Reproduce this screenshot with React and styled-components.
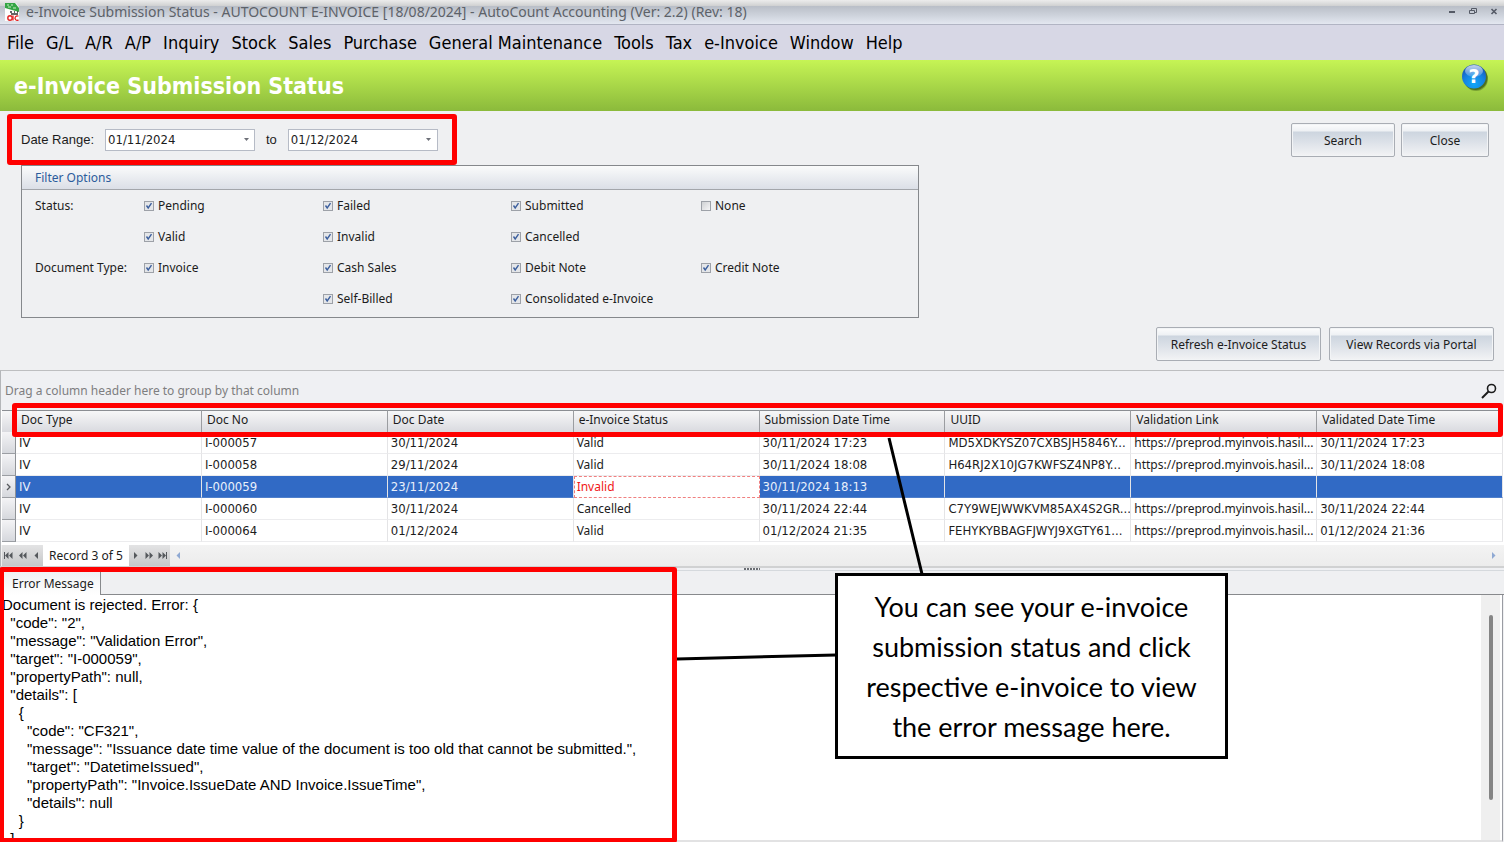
import { useState } from 'react';
import styled, { createGlobalStyle } from 'styled-components';

const GlobalStyle = createGlobalStyle`
  * {
    box-sizing: border-box;
  }

  body {
    margin: 0;
    background-color: #eff0f2;
    color: #1c1c1c;
    font-family: 'Noto Sans', sans-serif;
    font-size: 12px;
  }

  button,
  input {
    font: inherit;
    color: inherit;
  }
`;

const AppWindow = styled.div`
  display: flex;
  flex-direction: column;
  height: 100vh;
  overflow: hidden;
`;

const TitleBar = styled.header`
  display: flex;
  align-items: center;
  gap: 6px;
  height: 25px;
  flex-shrink: 0;
  padding: 0 4px;
  background: linear-gradient(#ececec 0, #cfd0d1 6px, #b9bec7 6px, #cdd2db 15px, #e3e7f0 24px);
  border-bottom: 1px solid #b1b4c3;
  color: #5d6269;
  font-size: 14px;
`;

const TitleText = styled.span`
  flex: 1;
  line-height: 24px;
  white-space: nowrap;
`;

const WindowControls = styled.div`
  display: flex;
  gap: 9px;
  align-self: flex-start;
  padding-top: 5px;
`;

const WindowButton = styled.button`
  display: flex;
  width: 12px;
  height: 12px;
  padding: 0;
  border: none;
  background: none;
  cursor: pointer;
`;

const MenuBar = styled.nav`
  display: flex;
  gap: 12px;
  flex-shrink: 0;
  height: 35px;
  padding: 0 7px;
  background-color: #d7d7e5;
`;

const MenuItem = styled.button`
  padding: 0;
  border: none;
  background: none;
  color: #000;
  font-family: 'DejaVu Sans Condensed', 'DejaVu Sans', sans-serif;
  font-size: 18px;
  line-height: 34px;
  white-space: nowrap;
  cursor: pointer;
`;

const Banner = styled.div`
  display: flex;
  align-items: center;
  justify-content: space-between;
  flex-shrink: 0;
  height: 51px;
  padding: 0 15px 0 14px;
  background: linear-gradient(#c6f455, #8bba3b);
`;

const BannerTitle = styled.h1`
  margin: 0;
  color: #fff;
  font-family: 'DejaVu Sans Condensed', 'DejaVu Sans', sans-serif;
  font-size: 23px;
  font-weight: bold;
  line-height: 50px;
`;

const HelpButton = styled.button`
  display: flex;
  align-self: flex-start;
  margin-top: 3px;
  padding: 0;
  border: none;
  background: none;
  cursor: pointer;
`;

const SearchRow = styled.div`
  display: flex;
  align-items: flex-start;
  justify-content: space-between;
  padding: 3px 15px 0 7px;
`;

const DateRange = styled.div`
  display: flex;
  align-items: center;
  gap: 11px;
  height: 51px;
  padding: 0 14px 0 9px;
  border: 5px solid #ff0000;
  border-radius: 3px;
  font-family: 'Liberation Sans', Arial, sans-serif;
  font-size: 13px;
`;

const DateField = styled.div`
  display: flex;
  width: 150px;
  height: 22px;
  border: 1px solid #b6bbc6;
  background-color: #fff;

  input {
    flex: 1;
    min-width: 0;
    padding: 0 2px;
    border: none;
    outline: none;
    background: none;
    font-family: 'DejaVu Sans Condensed', 'DejaVu Sans', sans-serif;
    font-size: 13px;
  }

  button {
    display: flex;
    align-items: center;
    justify-content: center;
    width: 16px;
    padding: 0;
    border: none;
    background: none;
  }
`;

const Actions = styled.div`
  display: flex;
  gap: ${props => props.$gap || '6px'};
  padding-top: 9px;
`;

const ActionRow = styled.div`
  display: flex;
  justify-content: flex-end;
  padding: 0 10px 9px 0;
`;

const ActionButton = styled.button`
  width: ${props => props.$width};
  height: 34px;
  padding: 0;
  border: 1px solid #a9adb4;
  border-radius: 2px;
  background: linear-gradient(#fcfcfd 0, #eef1f4 7px, #cdd5df 8px, #dce1e8 18px, #f1f2f4 31px);
  box-shadow: inset 0 0 0 1px #f2f4f6;
  cursor: pointer;
`;

const FilterBox = styled.section`
  flex-shrink: 0;
  width: 898px;
  max-width: calc(100% - 42px);
  margin-left: 21px;
  padding-bottom: 3px;
  border: 1px solid #85888c;
`;

const FilterTitle = styled.h2`
  margin: 0;
  padding-left: 13px;
  background: linear-gradient(#fafbfb, #dbdfe7);
  border-bottom: 1px solid #a3a6ab;
  color: #2c5c9c;
  font-size: 12px;
  font-weight: normal;
  line-height: 23px;
`;

const FilterGrid = styled.div`
  display: grid;
  grid-template-columns: 109px 179px 188px 190px auto;
  grid-auto-rows: 31px;
  align-items: center;
  padding-left: 13px;
`;

const FilterLabel = styled.span`
  grid-column: 1;
  white-space: nowrap;
`;

const CheckLabel = styled.label`
  display: flex;
  align-items: center;
  gap: 4px;
  grid-column: ${props => props.$col};
  justify-self: start;
  white-space: nowrap;
`;

const Checkbox = styled.input`
  appearance: none;
  width: 10px;
  height: 10px;
  margin: 0;
  border: 1px solid #9da1a8;
  background-color: #e4e6e9;
  background-image: ${props => props.checked
    ? `url("data:image/svg+xml,%3Csvg xmlns='http://www.w3.org/2000/svg' viewBox='0 0 8 8'%3E%3Cpath d='M1.5 3.5L3.2 6L6.5 1.2' fill='none' stroke='%233c5f9e' stroke-width='1.4'/%3E%3C/svg%3E")`
    : 'linear-gradient(135deg, #cfd1d4, #f6f6f7)'};
`;

const GridPanel = styled.section`
  flex-shrink: 0;
  border-top: 1px solid #bdbec0;
  border-left: 1px solid #b4b6b9;
  background-color: #fff;
`;

const GroupBar = styled.div`
  display: flex;
  align-items: center;
  justify-content: space-between;
  height: 39px;
  padding: 0 7px 0 4px;
  background-color: #eff0f3;
  color: #7e7e80;
`;

const SearchButton = styled.button`
  display: flex;
  padding: 0;
  border: none;
  background: none;
  cursor: pointer;
`;

const TableWrap = styled.div`
  position: relative;
  padding: 0 1px;
`;

const HeaderMark = styled.div`
  position: absolute;
  top: -7px;
  left: 11px;
  right: 1px;
  height: 34px;
  border: 5px solid #ff0000;
  border-radius: 3px;
  pointer-events: none;
`;

const Table = styled.table`
  width: 100%;
  table-layout: fixed;
  border-collapse: separate;
  border-spacing: 0;

  th,
  td {
    height: 22px;
    overflow: hidden;
    text-align: left;
    white-space: nowrap;
  }
`;

const IndicatorCol = styled.col`
  width: 14px;
`;

const HeaderCell = styled.th`
  padding: 0 5px 3px;
  border-top: 1px solid #8b8e93;
  border-right: 1px solid #9b9da1;
  background: linear-gradient(#f7f7f8, #d9dadf);
  font-weight: normal;
  line-height: 18px;
`;

const Indicator = styled.td`
  padding: 0 0 0 4px;
  border-right: 1px solid #8f9297;
  border-bottom: 1px solid #9b9ea3;
  background: linear-gradient(#f4f4f6, #d6d8dd);
`;

const Cell = styled.td`
  padding: 0 0 0 3px;
  border-right: 1px solid #e4e4e6;
  border-bottom: 1px solid ${props => (props.$selected ? '#4f7fcb' : '#ececee')};
  background-color: ${props => (props.$selected ? '#316ac5' : '#fff')};
  color: ${props => (props.$selected ? '#e9f0fb' : '#1c1c1c')};
  font-family: 'DejaVu Sans Condensed', 'DejaVu Sans', sans-serif;
  font-size: 13px;
  line-height: 18px;
`;

const TextCell = styled(Cell)`
  font-family: 'Noto Sans', sans-serif;
  font-size: 12px;
`;

const FocusCell = styled(TextCell)`
  padding: 0 2px;
  border: 1px dashed #f08080;
  background-color: #fff;
  color: #f01818;
`;

const Navigator = styled.div`
  display: flex;
  align-items: stretch;
  height: 21px;
  margin-top: 3px;
  padding: 0 6px 0 1px;
  background: linear-gradient(#f3f3f3, #ececec);
`;

const NavGroup = styled.div`
  display: flex;
  align-items: center;
  justify-content: space-around;
  width: 41px;
  background: linear-gradient(#e3e3e4, #c6c7c9);
`;

const NavButton = styled.button`
  display: flex;
  padding: 0;
  border: none;
  background: none;
`;

const RecordText = styled.span`
  padding: 0 6px;
  background-color: #fff;
  line-height: 21px;
`;

const HorizontalScroll = styled.div`
  display: flex;
  flex: 1;
  align-items: center;
  justify-content: space-between;
  padding-left: 4px;
`;

const BottomPane = styled.section`
  position: relative;
  display: flex;
  flex: 1;
  flex-direction: column;
  min-height: 0;
`;

const Splitter = styled.div`
  display: flex;
  align-items: center;
  justify-content: center;
  flex-shrink: 0;
  height: 5px;
  border-top: 2px solid #d0d1d2;
  border-bottom: 1px solid #d5d9dd;
  background-color: #eff0f3;
`;

const TabStrip = styled.div`
  display: flex;
  flex-shrink: 0;
  height: 24px;
  padding-left: 4px;
  border-bottom: 1px solid #87898c;
`;

const MessageTab = styled.button`
  height: 24px;
  padding: 0 6px 0 8px;
  border: 1px solid #87898c;
  border-left: none;
  border-bottom: none;
  background: linear-gradient(#f0f1f3, #fff);
`;

const MessageBody = styled.div`
  display: flex;
  flex: 1;
  min-height: 0;
  margin-right: 1px;
  border-right: 1px solid #9a9ca3;
  border-bottom: 2px solid #e2e2e3;
  background-color: #fff;
`;

const MessageText = styled.pre`
  flex: 1;
  margin: 0;
  padding: 1px 2px;
  overflow: hidden;
  color: #000;
  font-family: 'Liberation Sans', Arial, sans-serif;
  font-size: 15px;
  line-height: 18px;
`;

const ScrollTrack = styled.div`
  display: flex;
  justify-content: center;
  width: 19px;
  margin-right: 2px;
  padding: 20px 0 40px;
  background-color: #efefef;
`;

const ScrollThumb = styled.div`
  width: 4px;
  border-radius: 2px;
  background-color: #858585;
`;

const MessageMark = styled.div`
  position: absolute;
  top: 1px;
  bottom: -1px;
  left: -1px;
  width: 678px;
  border: 5px solid #ff0000;
  border-radius: 3px;
  pointer-events: none;
`;

const Connectors = styled.svg`
  position: absolute;
  top: 0;
  left: 0;
  overflow: visible;
  pointer-events: none;
`;

const Callout = styled.aside`
  position: absolute;
  top: 7px;
  left: 835px;
  width: 393px;
  padding: 11px 0 9px;
  border: 3px solid #000;
  background-color: #fff;
  color: #000;
  font-family: Lato, sans-serif;
  font-size: 27px;
  line-height: 40px;
  text-align: center;
`;

const menuItems = [
  'File', 'G/L', 'A/R', 'A/P', 'Inquiry', 'Stock', 'Sales', 'Purchase',
  'General Maintenance', 'Tools', 'Tax', 'e-Invoice', 'Window', 'Help',
];

const filterRows = [
  { label: 'Status:', options: ['Pending', 'Failed', 'Submitted', 'None'] },
  { label: '', options: ['Valid', 'Invalid', 'Cancelled'] },
  { label: 'Document Type:', options: ['Invoice', 'Cash Sales', 'Debit Note', 'Credit Note'] },
  { label: '', options: [null, 'Self-Billed', 'Consolidated e-Invoice'] },
];

const columns = [
  'Doc Type', 'Doc No', 'Doc Date', 'e-Invoice Status',
  'Submission Date Time', 'UUID', 'Validation Link', 'Validated Date Time',
];

const portalLink = 'https://preprod.myinvois.hasil...';

const records = [
  ['IV', 'I-000057', '30/11/2024', 'Valid', '30/11/2024 17:23', 'MD5XDKYSZ07CXBSJH5846Y...', portalLink, '30/11/2024 17:23'],
  ['IV', 'I-000058', '29/11/2024', 'Valid', '30/11/2024 18:08', 'H64RJ2X10JG7KWFSZ4NP8Y...', portalLink, '30/11/2024 18:08'],
  ['IV', 'I-000059', '23/11/2024', 'Invalid', '30/11/2024 18:13', '', '', ''],
  ['IV', 'I-000060', '30/11/2024', 'Cancelled', '30/11/2024 22:44', 'C7Y9WEJWWKVM85AX4S2GR...', portalLink, '30/11/2024 22:44'],
  ['IV', 'I-000064', '01/12/2024', 'Valid', '01/12/2024 21:35', 'FEHYKYBBAGFJWYJ9XGTY61...', portalLink, '01/12/2024 21:36'],
];

const errorMessage = `Document is rejected. Error: {
  "code": "2",
  "message": "Validation Error",
  "target": "I-000059",
  "propertyPath": null,
  "details": [
    {
      "code": "CF321",
      "message": "Issuance date time value of the document is too old that cannot be submitted.",
      "target": "DatetimeIssued",
      "propertyPath": "Invoice.IssueDate AND Invoice.IssueTime",
      "details": null
    }
  ]`;

const AppIcon = () => (
  <svg width="16" height="20" viewBox="0 0 16 20">
    <path d="M1 1h11l3 4v14H1z" fill="#fdfdfd" />
    <path d="M1 1h10l4 5v4L1 6z" fill="#35a544" />
    <path d="M3 3h2M7 3h2M4 5h3M9 6h3" stroke="#c9f0c4" strokeWidth="1" />
    <path d="M6 10h2M10 10h1M13 10h1M7 12h7" stroke="#333" strokeWidth="1.4" />
    <circle cx="6" cy="16" r="2.2" fill="none" stroke="#e32222" strokeWidth="1.4" />
    <path d="M9 13.5v5" stroke="#e32222" strokeWidth="1.3" />
    <path d="M14.500 14.300a2.200 2.200 0 1 0 0 3.600" fill="none" stroke="#e32222" strokeWidth="1.3" />
  </svg>
);

const HelpIcon = () => (
  <svg width="27" height="29" viewBox="0 0 27 29">
    <defs>
      <radialGradient id="helpBall" cx="0.5" cy="0.8" r="0.75">
        <stop offset="0" stopColor="#12a8f8" />
        <stop offset="0.6" stopColor="#1580e0" />
        <stop offset="1" stopColor="#1b56b4" />
      </radialGradient>
      <linearGradient id="helpShine" x1="0" y1="0" x2="0" y2="1">
        <stop offset="0" stopColor="#fff" stopOpacity="0.75" />
        <stop offset="1" stopColor="#fff" stopOpacity="0.15" />
      </linearGradient>
    </defs>
    <circle cx="14" cy="16" r="12" fill="#2d4a12" opacity="0.35" />
    <circle cx="13.5" cy="15" r="12" fill="#2d4a12" opacity="0.6" />
    <circle cx="12" cy="13.5" r="12" fill="url(#helpBall)" />
    <ellipse cx="12" cy="8" rx="9" ry="6" fill="url(#helpShine)" />
    <text x="12" y="20" textAnchor="middle" fontSize="19" fontWeight="bold" fontFamily="DejaVu Sans, sans-serif" fill="#fff">?</text>
  </svg>
);

const SearchIcon = () => (
  <svg width="16" height="16" viewBox="0 0 16 16" fill="none" stroke="#1c1c1c">
    <circle cx="10.5" cy="5.5" r="4" strokeWidth="1.6" />
    <path d="M7.5 8.5L1 15" strokeWidth="2" />
  </svg>
);

const DropArrow = () => (
  <svg width="5" height="3" viewBox="0 0 5 3">
    <path d="M0 0h5L2.5 3z" fill="#6d7078" />
  </svg>
);

const NavIcon = ({ kind, flip, color = '#55585c' }) => (
  <svg width="9" height="7" viewBox="0 0 9 7" fill={color}>
    <g transform={flip ? 'translate(9 0) scale(-1 1)' : undefined}>
      {kind === 'end' && <path d="M0 0h1v7H0zM4.500 0v7L1 3.500zM8.500 0v7L5 3.500z" />}
      {kind === 'page' && <path d="M4.500 0v7L1 3.500zM8.500 0v7L5 3.500z" />}
      {kind === 'step' && <path d="M6 0v7L2.500 3.500z" />}
    </g>
  </svg>
);

const App = () => {
  const [unchecked, setUnchecked] = useState(['None']);
  const [dateFrom, setDateFrom] = useState('01/11/2024');
  const [dateTo, setDateTo] = useState('01/12/2024');

  const toggleFilter = (name) => {
    setUnchecked(prev => (prev.includes(name) ? prev.filter(n => n !== name) : [...prev, name]));
  };

  // Pick the cell style from the column and the row state
  const renderCell = (value, col, selected) => {
    if (col === 3 && selected) {
      return <FocusCell key={col}>{value}</FocusCell>;
    }
    if (col === 3 || col === 6) {
      return <TextCell key={col} $selected={selected}>{value}</TextCell>;
    }
    return <Cell key={col} $selected={selected}>{value}</Cell>;
  };

  return (
    <>
      <GlobalStyle />
      <AppWindow>
        <TitleBar>
          <AppIcon />
          <TitleText>
            e-Invoice Submission Status - AUTOCOUNT E-INVOICE [18/08/2024] - AutoCount Accounting (Ver: 2.2) (Rev: 18)
          </TitleText>
          <WindowControls>
            <WindowButton aria-label="Minimize">
              <svg width="12" height="12"><path d="M3 7h6" stroke="#555a66" strokeWidth="2" /></svg>
            </WindowButton>
            <WindowButton aria-label="Restore">
              <svg width="12" height="12" fill="none" stroke="#555a66">
                <path d="M4.500 5V3.500h5v4H8M2.500 5.500h5v3h-5z" />
              </svg>
            </WindowButton>
            <WindowButton aria-label="Close window">
              <svg width="12" height="12"><path d="M3.500 4l5 5M8.500 4l-5 5" stroke="#555a66" strokeWidth="1.6" /></svg>
            </WindowButton>
          </WindowControls>
        </TitleBar>

        <MenuBar>
          {menuItems.map(item => <MenuItem key={item}>{item}</MenuItem>)}
        </MenuBar>

        <Banner>
          <BannerTitle>e-Invoice Submission Status</BannerTitle>
          <HelpButton aria-label="Help topics"><HelpIcon /></HelpButton>
        </Banner>

        <SearchRow>
          <DateRange>
            <label htmlFor="date-from">Date Range:</label>
            <DateField>
              <input id="date-from" value={dateFrom} onChange={e => setDateFrom(e.target.value)} />
              <button aria-label="Pick start date"><DropArrow /></button>
            </DateField>
            <label htmlFor="date-to">to</label>
            <DateField>
              <input id="date-to" value={dateTo} onChange={e => setDateTo(e.target.value)} />
              <button aria-label="Pick end date"><DropArrow /></button>
            </DateField>
          </DateRange>
          <Actions>
            <ActionButton $width="104px">Search</ActionButton>
            <ActionButton $width="88px">Close</ActionButton>
          </Actions>
        </SearchRow>

        <FilterBox>
          <FilterTitle>Filter Options</FilterTitle>
          <FilterGrid>
            {filterRows.map((row, r) => [
              <FilterLabel key={`label-${r}`}>{row.label}</FilterLabel>,
              ...row.options.map((name, i) => name && (
                <CheckLabel key={name} $col={i + 2}>
                  <Checkbox
                    type="checkbox"
                    checked={!unchecked.includes(name)}
                    onChange={() => toggleFilter(name)}
                  />
                  {name}
                </CheckLabel>
              )),
            ])}
          </FilterGrid>
        </FilterBox>

        <ActionRow>
          <Actions $gap="8px">
            <ActionButton $width="165px">Refresh e-Invoice Status</ActionButton>
            <ActionButton $width="165px">View Records via Portal</ActionButton>
          </Actions>
        </ActionRow>

        <GridPanel>
          <GroupBar>
            Drag a column header here to group by that column
            <SearchButton aria-label="Find"><SearchIcon /></SearchButton>
          </GroupBar>
          <TableWrap>
            <Table>
              <colgroup>
                <IndicatorCol />
                {columns.map(name => <col key={name} />)}
              </colgroup>
              <thead>
                <tr>
                  <HeaderCell />
                  {columns.map(name => <HeaderCell key={name}>{name}</HeaderCell>)}
                </tr>
              </thead>
              <tbody>
                {records.map((record, r) => (
                  <tr key={record[1]}>
                    <Indicator>
                      {r === 2 && (
                        <svg width="6" height="8" viewBox="0 0 6 8">
                          <path d="M1 1l3 3-3 3" fill="none" stroke="#55585c" strokeWidth="1.3" />
                        </svg>
                      )}
                    </Indicator>
                    {record.map((value, c) => renderCell(value, c, r === 2))}
                  </tr>
                ))}
              </tbody>
            </Table>
            <HeaderMark />
          </TableWrap>
          <Navigator>
            <NavGroup>
              <NavButton aria-label="First record"><NavIcon kind="end" /></NavButton>
              <NavButton aria-label="Previous page"><NavIcon kind="page" /></NavButton>
              <NavButton aria-label="Previous record"><NavIcon kind="step" /></NavButton>
            </NavGroup>
            <RecordText>Record 3 of 5</RecordText>
            <NavGroup>
              <NavButton aria-label="Next record"><NavIcon kind="step" flip /></NavButton>
              <NavButton aria-label="Next page"><NavIcon kind="page" flip /></NavButton>
              <NavButton aria-label="Last record"><NavIcon kind="end" flip /></NavButton>
            </NavGroup>
            <HorizontalScroll>
              <NavButton aria-label="Scroll left"><NavIcon kind="step" color="#8fa9d3" /></NavButton>
              <NavButton aria-label="Scroll right"><NavIcon kind="step" flip color="#8fa9d3" /></NavButton>
            </HorizontalScroll>
          </Navigator>
        </GridPanel>

        <BottomPane>
          <Splitter>
            <svg width="16" height="2"><path d="M0 1h16" stroke="#6b6e73" strokeWidth="2" strokeDasharray="2 1" /></svg>
          </Splitter>
          <TabStrip>
            <MessageTab>Error Message</MessageTab>
          </TabStrip>
          <MessageBody>
            <MessageText>{errorMessage}</MessageText>
            <ScrollTrack><ScrollThumb /></ScrollTrack>
          </MessageBody>
          <MessageMark />
          <Connectors width="1" height="1" stroke="#000" strokeWidth="3">
            <path d="M889 -128L922 8M677 93L836 89" />
          </Connectors>
          <Callout>
            You can see your e-invoice<br />
            submission status and click<br />
            respective e-invoice to view<br />
            the error message here.
          </Callout>
        </BottomPane>
      </AppWindow>
    </>
  );
};

export default App;
